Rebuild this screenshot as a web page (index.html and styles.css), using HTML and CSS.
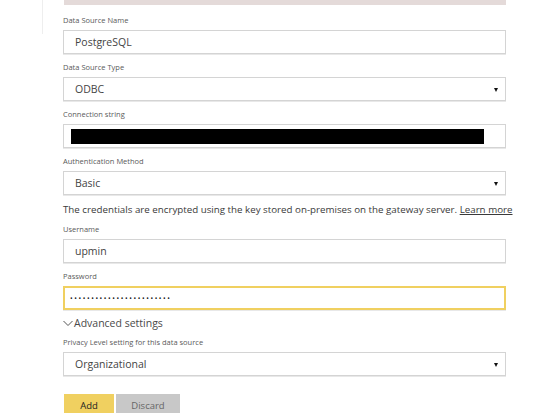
FILE: index.html
```html
<!DOCTYPE html>
<html>
<head>
<meta charset="utf-8">
<link rel="stylesheet" href="styles.css">
</head>
<body>
<div class="page">
  <div class="rail"></div>
  <div class="main">
    <div class="topbar"></div>
    <div class="field first">
      <div class="label">Data Source Name</div>
      <div class="box">PostgreSQL</div>
    </div>
    <div class="field">
      <div class="label">Data Source Type</div>
      <div class="box select">ODBC<span class="arrow"></span></div>
    </div>
    <div class="field">
      <div class="label">Connection string</div>
      <div class="box"><span class="redact"></span></div>
    </div>
    <div class="field">
      <div class="label">Authentication Method</div>
      <div class="box select">Basic<span class="arrow"></span></div>
    </div>
    <p class="note">The credentials are encrypted using the key stored on-premises on the gateway server. <a class="link">Learn more</a></p>
    <div class="field">
      <div class="label">Username</div>
      <div class="box">upmin</div>
    </div>
    <div class="field">
      <div class="label">Password</div>
      <div class="box focus"><span class="dots">••••••••••••••••••••••••</span></div>
    </div>
    <div class="adv"><svg class="chev" width="10" height="7" viewBox="0 0 10 7"><path d="M0.5 1 L5 5.5 L9.5 1" fill="none" stroke="#555" stroke-width="1"/></svg>Advanced settings</div>
    <div class="field privacy">
      <div class="label">Privacy Level setting for this data source</div>
      <div class="box select">Organizational<span class="arrow"></span></div>
    </div>
    <div class="buttons">
      <button class="btn add">Add</button>
      <button class="btn discard">Discard</button>
    </div>
  </div>
</div>
</body>
</html>
```
FILE: styles.css
```css
html, body { margin: 0; padding: 0; background: #fff; }
body { font-family: "Open Sans", "Noto Sans", sans-serif; color: #333; width: 546px; height: 413px; overflow: hidden; }
.page { display: flex; }
.rail { width: 42px; height: 34px; border-right: 1px solid #eeeeee; flex: none; }
.main { margin-left: 20px; width: 443px; }
.topbar { height: 5px; background: #e4dad9; margin-left: 1px; width: 442px; }
.field { display: flex; flex-direction: column; }
.label { font-size: 7.5px; line-height: 12px; color: #5a5a5a; margin-top: 7px; margin-bottom: 4px; }
.field.first .label { margin-top: 9px; }
.field.privacy .label { margin-top: 6px; }
.box { height: 22px; border: 1px solid #d4d4d4; box-shadow: 0 1px 0 #e8e8e8; display: flex; align-items: center; padding-left: 11px; font-size: 10.5px; color: #444; position: relative; }
.select .arrow { position: absolute; right: 7px; top: 10px; width: 0; height: 0; border-left: 2.5px solid transparent; border-right: 2.5px solid transparent; border-top: 4px solid #111; }
.redact { display: block; width: 413px; height: 15px; background: #000; margin-left: -4px; }
.focus { border: 2px solid #f0d060; height: 20px; padding-left: 5px; }
.dots { font-size: 7px; letter-spacing: 1.6px; color: #222; }
.note { margin: 9px 0 0 0; font-size: 9.75px; line-height: 12px; color: #3a3a3a; white-space: nowrap; }
.link { text-decoration: underline; color: #3a3a3a; }
.adv { display: flex; align-items: center; margin-top: 6px; font-size: 10.5px; line-height: 14px; color: #4a4a4a; }
.chev { margin-right: 1px; }
.buttons { display: flex; gap: 2px; margin-top: 18px; margin-left: 1px; }
.btn { border: none; height: 22px; font-family: inherit; font-size: 9.5px; padding: 0; color: #222; }
.add { background: #f0d060; width: 50px; }
.discard { background: #c8c8c8; width: 64px; color: #666; }
```
